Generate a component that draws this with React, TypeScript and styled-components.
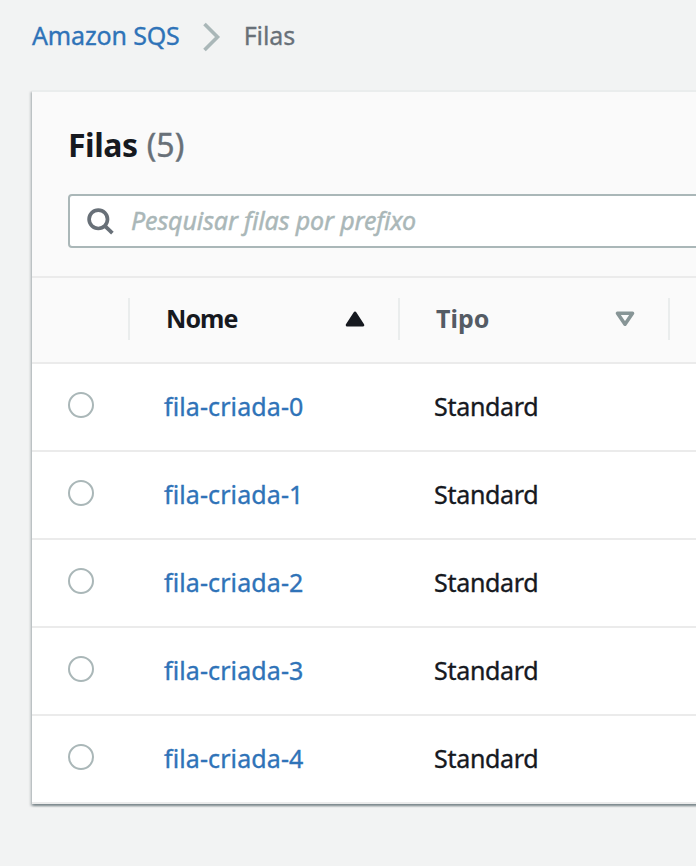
import React from 'react';
import styled, { createGlobalStyle } from 'styled-components';

const GlobalStyle = createGlobalStyle`
  * { box-sizing: border-box; }
  body {
    margin: 0;
    background: #f2f3f3;
    color: #16191f;
    font: 400 25px/34px "Noto Sans", "Open Sans", sans-serif;
    overflow: hidden;
  }
`;

const Page = styled.main`
  height: 866px;
  overflow: hidden;
  padding-left: 32px;
  white-space: nowrap;
`;

const Breadcrumbs = styled.nav`
  display: flex;
  align-items: center;
  height: 90px;
  padding: 0 0 21px;
`;

const Link = styled.a<{ $spacing?: number }>`
  color: #2f73b8;
  text-decoration: none;
  letter-spacing: ${p => p.$spacing ?? 0}px;
  -webkit-text-stroke: 0.35px currentColor;
`;

const Chevron = styled.svg`
  width: 18px;
  height: 30px;
  margin: 5px 23px 0 23px;
`;

const Current = styled.span`
  color: #687078;
  letter-spacing: -0.1px;
  -webkit-text-stroke: 0.3px currentColor;
`;

const Card = styled.section`
  width: 900px;
  border-top: 2px solid #eaeded;
  background: #fff;
  box-shadow: 0 2px 2px rgba(0, 28, 36, 0.3), 2px 2px 2px rgba(0, 28, 36, 0.15),
    -2px 2px 2px rgba(0, 28, 36, 0.15);
`;

const CardHeader = styled.header`
  height: 186px;
  padding: 31px 36px 0;
  background: #fafafa;
  border-bottom: 2px solid #ebebeb;
`;

const Title = styled.h1`
  display: flex;
  gap: 9px;
  margin: 0 0 27px;
  font-size: 32px;
  line-height: 44px;
  font-weight: 700;
  letter-spacing: -0.45px;
`;

const Count = styled.span`
  color: #687078;
  font-weight: 400;
  letter-spacing: 0.1px;
  -webkit-text-stroke: 0.4px currentColor;
`;

const SearchField = styled.label`
  display: flex;
  align-items: center;
  height: 54px;
  padding-left: 17px;
  background: #fff;
  border: 2px solid #aab7b8;
  border-radius: 4px;
`;

const SearchIcon = styled.svg`
  width: 28px;
  height: 28px;
  margin-right: 16px;
`;

const Placeholder = styled.span`
  color: #aab7b8;
  font-style: italic;
  letter-spacing: -0.12px;
  padding-bottom: 2px;
  -webkit-text-stroke: 0.45px currentColor;
`;

const Columns = styled.div`
  display: grid;
  grid-template-columns: 98px 270px 270px 262px;
  align-items: center;
`;

const HeadRow = styled(Columns)`
  height: 86px;
  background: #fafafa;
  border-bottom: 2px solid #ebebeb;
  padding-bottom: 2px;
`;

const HeadCell = styled.div<{ $muted?: boolean }>`
  display: flex;
  align-items: center;
  justify-content: space-between;
  height: 42px;
  padding: 0 32px 0 36px;
  border-right: 2px solid #eaeded;
  color: ${p => (p.$muted ? '#545b64' : '#16191f')};
  font-weight: 700;
`;

const HeadLabel = styled.span<{ $spacing: number }>`
  letter-spacing: ${p => p.$spacing}px;
  padding-bottom: 2px;
`;

const SortIcon = styled.svg`
  width: 22px;
  height: 18px;
`;

const Row = styled(Columns)`
  height: 88px;
  border-bottom: 2px solid #ebebeb;
`;

const Radio = styled.span`
  width: 26px;
  height: 26px;
  margin: 0 0 4px 36px;
  border: 2px solid #aab7b8;
  border-radius: 50%;
`;

const Cell = styled.div`
  padding-left: 34px;
  padding-bottom: 3px;
`;

const Kind = styled.span`
  letter-spacing: -0.3px;
  -webkit-text-stroke: 0.35px currentColor;
`;

const queues = [0, 1, 2, 3, 4].map(n => ({ name: `fila-criada-${n}`, type: 'Standard' }));

export default function App() {
  return (
    <Page>
      <GlobalStyle />
      <Breadcrumbs>
        <Link $spacing={-0.15}>Amazon SQS</Link>
        <Chevron viewBox="0 0 18 30">
          <path d="M1.5 2 14.5 15 1.5 28" fill="none" stroke="#aab7b8" strokeWidth="3.6" />
        </Chevron>
        <Current>Filas</Current>
      </Breadcrumbs>
      <Card>
        <CardHeader>
          <Title>
            <span>Filas</span>
            <Count>(5)</Count>
          </Title>
          <SearchField>
            <SearchIcon viewBox="0 0 28 28">
              <g fill="none" stroke="#687078" strokeWidth="3.7">
                <circle cx="11.3" cy="12.3" r="9.2" />
                <path d="m17.8 18.8 7.6 7.4" />
              </g>
            </SearchIcon>
            <Placeholder>Pesquisar filas por prefixo</Placeholder>
          </SearchField>
        </CardHeader>
        <HeadRow>
          <HeadCell />
          <HeadCell>
            <HeadLabel $spacing={-0.95}>Nome</HeadLabel>
            <SortIcon viewBox="0 0 22 18">
              <path d="M11 3 18.8 15H3.2Z" fill="#16191f" stroke="#16191f" strokeWidth="3" strokeLinejoin="round" />
            </SortIcon>
          </HeadCell>
          <HeadCell $muted>
            <HeadLabel $spacing={0}>Tipo</HeadLabel>
            <SortIcon viewBox="0 0 22 18">
              <path d="M3.5 3.2H18.5L11 14.2Z" fill="none" stroke="#879596" strokeWidth="3.6" strokeLinejoin="round" />
            </SortIcon>
          </HeadCell>
        </HeadRow>
        {queues.map(q => (
          <Row key={q.name}>
            <Radio />
            <Cell><Link $spacing={0.1}>{q.name}</Link></Cell>
            <Cell><Kind>{q.type}</Kind></Cell>
          </Row>
        ))}
      </Card>
    </Page>
  );
}
